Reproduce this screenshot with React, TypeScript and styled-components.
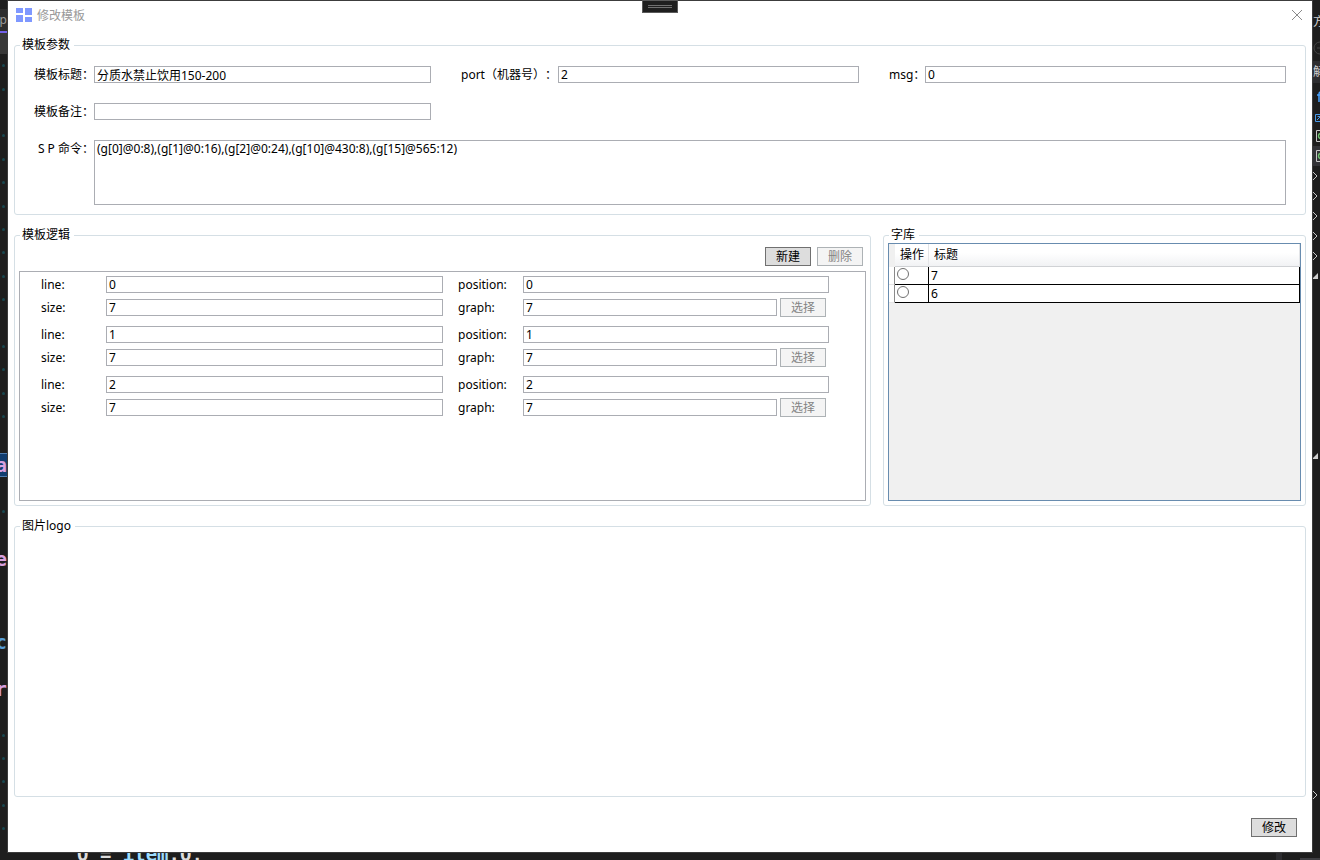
import React from "react";
import styled, { createGlobalStyle, css } from "styled-components";

const GlobalStyle = createGlobalStyle`
  *, *::before, *::after { box-sizing: border-box; }
  body {
    margin: 0;
    background: #1e1e1e;
    color: #000;
    font-family: "Noto Sans", "Noto Sans CJK SC", sans-serif;
    font-size: 12px;
    line-height: 16px;
    text-spacing-trim: space-all;
  }
  button, input, textarea { font: inherit; color: inherit; margin: 0; border-radius: 0; }
`;

const Desktop = styled.div`
  position: relative;
  display: grid;
  grid-template-columns: 7px minmax(0, 1fr) 7px;
  grid-template-rows: minmax(0, 1fr) 7px;
  min-height: 100vh;
  overflow: hidden;
`;

const EditorStrip = styled.div`
  display: flex;
  flex-direction: column;
  overflow: hidden;
  height: 0;
  min-height: 100%;
  color: #d8a0df;
  font: bold 19px/24px "DejaVu Sans Mono", monospace;
`;

const EditorTab = styled.div`
  display: flex;
  justify-content: flex-end;
  flex: none;
  margin-top: 9px;
  height: 24px;
  background: #2d2d2d;
  border-bottom: 2px solid #7160e8;
  color: #9a9a9a;
  font: 12px/22px "Noto Sans", sans-serif;
`;

const EditorNav = styled.div`
  flex: none;
  height: 21px;
  background: #383838;
`;

const CodeLine = styled.div<{ $height: number; $color?: string; $selected?: boolean }>`
  display: flex;
  align-items: center;
  justify-content: flex-end;
  flex: none;
  height: ${(p) => p.$height}px;
  color: ${(p) => p.$color || "#d8a0df"};
  ${(p) =>
    p.$selected &&
    css`
      background: #113d6f;
      border: solid #4f7db0;
      border-width: 1px 0;
    `}
`;

const SpaceDot = styled.i`
  width: 3px;
  height: 3px;
  margin-right: 2px;
  border-radius: 50%;
  background: #18474f;
`;

const TreeStrip = styled.div`
  display: flex;
  flex-direction: column;
  overflow: hidden;
  height: 0;
  min-height: 100%;
  color: #d0d0d0;
`;

const TreeRow = styled.div<{ $height?: number; $bg?: string }>`
  display: flex;
  align-items: center;
  flex: none;
  height: ${(p) => p.$height || 20}px;
  background: ${(p) => p.$bg || "transparent"};
  white-space: nowrap;

  svg { flex: none; }
`;

const BottomStrip = styled.div`
  grid-column: 1 / -1;
  display: flex;
  justify-content: space-between;
  overflow: hidden;
`;

const CodeTail = styled.div`
  display: flex;
  align-items: center;
  padding: 0 0 6px 77px;
  white-space: pre;
  color: #dcdcdc;
  font: bold 19px/20px "DejaVu Sans Mono", monospace;

  span { color: #9cdcfe; }
`;

const PanelCorner = styled.div`
  display: flex;
  width: 44px;
  border-left: 6px solid #2d2d30;
  padding: 5px 0 0 18px;

  &::after { content: ""; flex: 1; background: #3e3e42; }
`;

const DebugHandle = styled.div`
  position: absolute;
  top: 0;
  left: 50%;
  transform: translateX(-50%);
  width: 36px;
  height: 13px;
  padding: 4px 5px;
  background: #1f1f1f;
  border: 1px solid #5a5a5a;

  &::before {
    content: "";
    display: block;
    height: 3px;
    border: solid #707070;
    border-width: 1px 0;
  }
`;

const Dialog = styled.main`
  display: flex;
  flex-direction: column;
  background: #fff;
  border: 1px solid #3c3c3c;
`;

const TitleBar = styled.header`
  display: flex;
  align-items: center;
  gap: 5px;
  height: 28px;
  padding: 0 9px 0 8px;
`;

const Title = styled.h1`
  flex: 1;
  margin: 0;
  color: #999;
  font-size: 12px;
  line-height: 17px;
  font-weight: 400;
`;

const CloseButton = styled.button`
  display: flex;
  padding: 0;
  border: 0;
  background: none;
`;

const Body = styled.form`
  display: flex;
  flex-direction: column;
  flex: 1;
  gap: 12px;
  padding: 8px 6px 0;
`;

const Group = styled.fieldset<{ $grow?: boolean }>`
  display: flex;
  flex-direction: column;
  flex: ${(p) => (p.$grow ? "1 1 0" : "none")};
  min-width: 0;
  margin: 0;
  padding: 0;
  border: 1px solid #d5dfe5;
  border-radius: 3px;
`;

const Legend = styled.legend`
  margin-left: 5px;
  padding: 0 4px 0 2px;
`;

const Columns = styled.div`
  display: grid;
  grid-template-columns: 857fr 423fr;
  gap: 12px;
`;

const ParamGrid = styled.div`
  display: grid;
  grid-template-columns: 60px 337fr 30px 97px 301fr 30px 36px 361fr;
  row-gap: 20px;
  padding: 13px 19px 9px;
`;

const Label = styled.label<{ $start?: number; $right?: boolean }>`
  grid-column-start: ${(p) => p.$start || "auto"};
  white-space: pre;
  line-height: 17px;
  text-align: ${(p) => (p.$right ? "right" : "left")};
`;

const box = css`
  display: block;
  width: 100%;
  min-width: 0;
  padding: 0 2px;
  border: 1px solid #abadb3;
  background: #fff;
  outline: 0;
`;

const TextBox = styled.input`
  ${box}
  height: 17px;
`;

const CommandBox = styled.textarea`
  ${box}
  grid-column: 2 / -1;
  height: 65px;
  resize: none;
`;

const Button = styled.button`
  flex: none;
  width: 46px;
  height: 19px;
  padding: 0;
  border: 1px solid #707070;
  background: #ddd;
  line-height: 17px;

  &:disabled {
    border-color: #adb2b5;
    background: #f4f4f4;
    color: #838383;
  }
`;

const LogicPanel = styled.div`
  padding: 4px;
`;

const Toolbar = styled.div`
  display: flex;
  justify-content: flex-end;
  gap: 6px;
  padding: 0 3px 5px 0;
`;

const LogicList = styled.div`
  display: flex;
  flex-direction: column;
  gap: 9px;
  min-height: 230px;
  padding: 4px 36px 4px 21px;
  border: 1px solid #abadb3;
`;

const LogicItem = styled.div`
  display: grid;
  grid-template-columns: 65px 337fr 15px 65px 306fr;
  grid-template-rows: 17px 19px;
  align-items: center;
  row-gap: 5px;
`;

const Picker = styled.div`
  display: flex;
  align-items: center;
  gap: 3px;
  padding-right: 3px;
`;

const GridPanel = styled.div`
  flex: 1;
  margin: 0 4px 4px;
  border: 1px solid #688caf;
  background: #f0f0f0;
`;

const FontTable = styled.table`
  width: 100%;
  table-layout: fixed;
  border-collapse: separate;
  border-spacing: 0;
`;

const HeadCell = styled.th<{ $width?: number }>`
  width: ${(p) => (p.$width ? `${p.$width}px` : "auto")};
  height: 23px;
  padding: 0 0 0 5px;
  border-bottom: 1px solid #d0d2d5;
  border-right: 1px solid #e2e4e7;
  background: linear-gradient(#fff 40%, #f1f2f4);
  font-weight: 400;
  text-align: left;
  white-space: nowrap;
`;

const CornerCell = styled.td`
  width: 6px;
  padding: 0;
`;

const RowHead = styled.td`
  padding: 0;
  border-right: 1px solid #8a8a8a;
  border-bottom: 1px solid #e4e4e4;
  background: #fff;
`;

const Cell = styled.td`
  height: 18px;
  padding: 0 0 0 2px;
  border: solid #000;
  border-width: 0 1px 1px 0;
  background: #fff;
  line-height: 17px;
  vertical-align: top;
`;

const Radio = styled.input`
  display: block;
  appearance: none;
  width: 12px;
  height: 12px;
  margin: 1px 0 0;
  border: 1px solid #707070;
  border-radius: 50%;
  background: #fff;
`;

const Footer = styled.footer`
  display: flex;
  justify-content: flex-end;
  padding: 9px 9px 15px;
`;

const Logo = () => (
  <svg width="16" height="14" viewBox="0 0 16 14" fill="#7f98ff" aria-hidden="true">
    <path d="M0 0h7v5H0zM9 0h7v7H9zM0 7h7v7H0zM9 9h7v5H9z" />
  </svg>
);

const Chevron = () => (
  <svg width="7" height="10" viewBox="0 0 7 10" fill="none" stroke="#c8c8c8">
    <path d="M-.5.5L4 5L-.5 9.500" />
  </svg>
);

const Expanded = () => (
  <svg width="7" height="7" viewBox="0 0 7 7" fill="#d0d0d0">
    <path d="M5 0v6H-1z" />
  </svg>
);

const ProjectIcon = () => (
  <svg width="7" height="12" viewBox="0 0 7 12" fill="none">
    <path d="M8 .5H3.500v11H8" stroke="#c8c8c8" />
    <path d="M8 3.500Q5.500 3.500 5.500 6T8 8.500" stroke="#6fc36f" strokeWidth="1.500" />
  </svg>
);

type Line = { h: number; dot?: boolean; text?: string; color?: string; selected?: boolean };

const codeLines: Line[] = [
  { h: 23, dot: true }, { h: 24, dot: true }, { h: 23 }, { h: 23, dot: true }, { h: 24, dot: true },
  { h: 23, dot: true }, { h: 24, dot: true }, { h: 23, dot: true }, { h: 23, dot: true }, { h: 24, dot: true },
  { h: 23, dot: true }, { h: 24 }, { h: 23, dot: true }, { h: 23, dot: true }, { h: 24, dot: true },
  { h: 23, dot: true }, { h: 25 }, { h: 24, text: "a", selected: true }, { h: 23 }, { h: 23, dot: true },
  { h: 24 }, { h: 24, text: "e" }, { h: 59 }, { h: 24, text: "c", color: "#569cd6" }, { h: 23 },
  { h: 23, text: "r" }, { h: 23 }, { h: 24, dot: true }, { h: 23, dot: true }, { h: 23, dot: true },
  { h: 24, dot: true }, { h: 23, dot: true },
];

const logicItems = [
  { line: "0", position: "0", size: "7", graph: "7" },
  { line: "1", position: "1", size: "7", graph: "7" },
  { line: "2", position: "2", size: "7", graph: "7" },
];

const fonts = ["7", "6"];

export default function App() {
  return (
    <>
      <GlobalStyle />
      <Desktop lang="zh-CN">
        <EditorStrip aria-hidden="true">
          <EditorTab>np</EditorTab>
          <EditorNav />
          {codeLines.map((l, i) => (
            <CodeLine key={i} $height={l.h} $color={l.color} $selected={l.selected}>
              {l.dot ? <SpaceDot /> : l.text}
            </CodeLine>
          ))}
        </EditorStrip>

        <Dialog>
          <TitleBar>
            <Logo />
            <Title>修改模板</Title>
            <CloseButton type="button" aria-label="关闭">
              <svg width="12" height="12" viewBox="0 0 12 12" stroke="#8a8a8a" fill="none">
                <path d="M1 1l10 10M11 1L1 11" />
              </svg>
            </CloseButton>
          </TitleBar>

          <Body onSubmit={(e) => e.preventDefault()}>
            <Group>
              <Legend>模板参数</Legend>
              <ParamGrid>
                <Label htmlFor="title">模板标题：</Label>
                <TextBox id="title" defaultValue="分质水禁止饮用150-200" />
                <Label htmlFor="port" $start={4}>port（机器号）：</Label>
                <TextBox id="port" defaultValue="2" />
                <Label htmlFor="msg" $start={7}>msg：</Label>
                <TextBox id="msg" defaultValue="0" />
                <Label htmlFor="remark" $start={1}>模板备注：</Label>
                <TextBox id="remark" />
                <Label htmlFor="command" $start={1} $right>S P 命令：</Label>
                <CommandBox
                  id="command"
                  defaultValue="(g[0]@0:8),(g[1]@0:16),(g[2]@0:24),(g[10]@430:8),(g[15]@565:12)"
                />
              </ParamGrid>
            </Group>

            <Columns>
              <Group>
                <Legend>模板逻辑</Legend>
                <LogicPanel>
                  <Toolbar>
                    <Button type="button">新建</Button>
                    <Button type="button" disabled>删除</Button>
                  </Toolbar>
                  <LogicList>
                    {logicItems.map((item, i) => (
                      <LogicItem key={i}>
                        <Label htmlFor={`line${i}`}>line:</Label>
                        <TextBox id={`line${i}`} defaultValue={item.line} />
                        <Label htmlFor={`position${i}`} $start={4}>position:</Label>
                        <TextBox id={`position${i}`} defaultValue={item.position} />
                        <Label htmlFor={`size${i}`}>size:</Label>
                        <TextBox id={`size${i}`} defaultValue={item.size} />
                        <Label htmlFor={`graph${i}`} $start={4}>graph:</Label>
                        <Picker>
                          <TextBox id={`graph${i}`} defaultValue={item.graph} />
                          <Button type="button" disabled>选择</Button>
                        </Picker>
                      </LogicItem>
                    ))}
                  </LogicList>
                </LogicPanel>
              </Group>

              <Group>
                <Legend>字库</Legend>
                <GridPanel>
                  <FontTable>
                    <thead>
                      <tr>
                        <CornerCell />
                        <HeadCell $width={34}>操作</HeadCell>
                        <HeadCell>标题</HeadCell>
                      </tr>
                    </thead>
                    <tbody>
                      {fonts.map((name) => (
                        <tr key={name}>
                          <RowHead />
                          <Cell>
                            <Radio type="radio" name="font" value={name} aria-label={name} />
                          </Cell>
                          <Cell>{name}</Cell>
                        </tr>
                      ))}
                    </tbody>
                  </FontTable>
                </GridPanel>
              </Group>
            </Columns>

            <Group $grow>
              <Legend>图片logo</Legend>
            </Group>

            <Footer>
              <Button type="submit">修改</Button>
            </Footer>
          </Body>
        </Dialog>

        <TreeStrip aria-hidden="true">
          <TreeRow $height={9} />
          <TreeRow $height={26}>方</TreeRow>
          <TreeRow $height={26}>
            <svg width="7" height="14" viewBox="0 0 7 14" fill="none" stroke="#444">
              <circle cx="7" cy="7" r="6" />
              <path d="M4 7h4" />
            </svg>
          </TreeRow>
          <TreeRow $height={22} $bg="#2d2d30">解</TreeRow>
          <TreeRow $height={27}>
            <svg width="7" height="12" viewBox="0 0 7 12" fill="none" stroke="#4aa3ff" strokeWidth="1.500">
              <path d="M8 1Q6 1 6 3V11M4 4h4" />
            </svg>
          </TreeRow>
          <TreeRow $height={16}>
            <svg width="7" height="10" viewBox="0 0 7 10" fill="none" stroke="#4a9bea">
              <path d="M8 1.500H2.500v7H8M4 7l3-3M4.500 3.500H8" />
            </svg>
          </TreeRow>
          <TreeRow><ProjectIcon /></TreeRow>
          <TreeRow $bg="#333337"><ProjectIcon /></TreeRow>
          <TreeRow><Chevron /></TreeRow>
          <TreeRow><Chevron /></TreeRow>
          <TreeRow><Chevron /></TreeRow>
          <TreeRow><Chevron /></TreeRow>
          <TreeRow><Chevron /></TreeRow>
          <TreeRow><Expanded /></TreeRow>
          <TreeRow $height={160} />
          <TreeRow><Expanded /></TreeRow>
          <TreeRow $height={319} />
          <TreeRow><Chevron /></TreeRow>
        </TreeStrip>

        <BottomStrip aria-hidden="true">
          <CodeTail>
            Q = <span>item</span>.Q,
          </CodeTail>
          <PanelCorner />
        </BottomStrip>

        <DebugHandle />
      </Desktop>
    </>
  );
}
